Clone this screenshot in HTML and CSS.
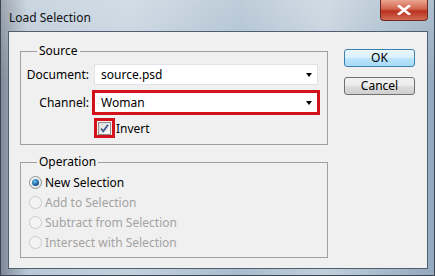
FILE: index.html
```html
<!DOCTYPE html>
<html lang="en">

<head>
  <meta charset="UTF-8">
  <title>Load Selection</title>
  <link rel="stylesheet" href="styles.css">
</head>

<body>
  <div class="window">
    <div class="titlebar">
      <span class="title">Load Selection</span>
      <div class="close">
        <svg width="14" height="10" viewBox="0 0 14 10">
          <path d="M2 1 L12 9 M12 1 L2 9" stroke="#fff" stroke-width="2.6" stroke-linecap="square" />
        </svg>
      </div>
    </div>

    <div class="client">
      <div class="groups">
        <fieldset class="group source">
          <legend>Source</legend>
          <div class="field">
            <label>Document:</label>
            <div class="select">
              <span>source.psd</span>
              <span class="arrow"></span>
            </div>
          </div>
          <div class="field">
            <label>Channel:</label>
            <div class="select marked">
              <span>Woman</span>
              <span class="arrow"></span>
            </div>
          </div>
          <div class="check-row">
            <span class="mark-box">
              <span class="checkbox">
                <svg width="11" height="11" viewBox="0 0 11 11">
                  <path d="M2 5.5 L4.3 8.3 L9 1.8" fill="none" stroke="#3e5a8a" stroke-width="1.8" />
                </svg>
              </span>
            </span>
            <span>Invert</span>
          </div>
        </fieldset>

        <fieldset class="group operation">
          <legend>Operation</legend>
          <div class="options">
            <div class="radio checked"><span class="dot"></span>New Selection</div>
            <div class="radio disabled"><span class="dot"></span>Add to Selection</div>
            <div class="radio disabled"><span class="dot"></span>Subtract from Selection</div>
            <div class="radio disabled"><span class="dot"></span>Intersect with Selection</div>
          </div>
        </fieldset>
      </div>

      <div class="buttons">
        <div class="btn default">OK</div>
        <div class="btn">Cancel</div>
      </div>
    </div>
  </div>
</body>

</html>
```

FILE: styles.css
```css
body {
  margin: 0;
  padding: 0;
  font-family: "Noto Sans", "Open Sans", sans-serif;
  font-size: 12px;
  color: #000;
}

.window {
  width: 435px;
  height: 276px;
  box-sizing: border-box;
  border: 1px solid #3b4654;
  border-top: none;
  background:
    linear-gradient(to bottom, rgba(255, 255, 255, 0.25), rgba(255, 255, 255, 0) 30%),
    linear-gradient(to right, #7d8896 0%, #b9c8d6 6%, #c3d1dd 30%, #a9bccd 55%, #c1cfdb 75%, #93a9bf 100%);
  display: flex;
  flex-direction: column;
}

.titlebar {
  height: 31px;
  display: flex;
  align-items: flex-start;
}

.title {
  padding: 9px 0 0 8px;
  font-size: 12px;
  color: #111;
}

.close {
  margin-left: auto;
  margin-right: 6px;
  width: 46px;
  height: 20px;
  border: 1px solid #6b2b20;
  border-top: none;
  border-radius: 0 0 4px 4px;
  background: linear-gradient(to bottom, #e9a48f, #d2654f 45%, #b8321f 55%, #d46b55);
  display: flex;
  align-items: center;
  justify-content: center;
}

.client {
  flex: 1;
  margin: 0 6px 6px 7px;
  border: 1px solid #4f5e70;
  background: #f0f0f0;
  display: flex;
}

.groups {
  padding: 11px 0 0 11px;
}

.group {
  width: 308px;
  box-sizing: border-box;
  margin: 0;
  padding: 0;
  border: 1px solid #a0a0a0;
}

.group legend {
  margin-left: 16px;
  padding: 0 2px;
  line-height: 16px;
}

.source {
  padding: 5px 0 6px 0;
}

.field {
  display: flex;
  align-items: center;
  gap: 5px;
  margin-bottom: 7px;
}

.field label {
  width: 68px;
  text-align: right;
}

.select {
  width: 224px;
  height: 21px;
  box-sizing: border-box;
  border: 1px solid #e2e3e6;
  background: #fff;
  display: flex;
  align-items: center;
  padding: 0 5px 0 6px;
}

.select.marked {
  border-color: #d4121c;
  outline: 2px solid #d4121c;
}

.select .arrow {
  margin-left: auto;
  border-left: 3.5px solid transparent;
  border-right: 3.5px solid transparent;
  border-top: 4px solid #000;
}

.check-row {
  display: flex;
  align-items: center;
  margin: -2px 0 0 73px;
  gap: 1px;
}

.mark-box {
  width: 21px;
  height: 20px;
  box-sizing: border-box;
  border: 3px solid #d4121c;
  display: flex;
  align-items: center;
  justify-content: center;
}

.checkbox {
  width: 13px;
  height: 13px;
  box-sizing: border-box;
  border: 1px solid #8f8f8f;
  background: linear-gradient(135deg, #dcdcdc, #fbfbfb);
  display: flex;
  align-items: center;
  justify-content: center;
}

.operation {
  margin-top: 9px;
  padding: 2px 0 5px 0;
}

.options {
  padding-left: 8px;
}

.radio {
  height: 20px;
  display: flex;
  align-items: center;
  gap: 3px;
}

.radio .dot {
  width: 13px;
  height: 13px;
  box-sizing: border-box;
  border-radius: 50%;
  border: 1px solid #8e8f8f;
  background: radial-gradient(circle at 40% 40%, #fff, #dedede);
  display: flex;
  align-items: center;
  justify-content: center;
}

.radio.checked .dot::after {
  content: "";
  width: 7px;
  height: 7px;
  border-radius: 50%;
  background: radial-gradient(circle at 40% 35%, #6cc0ef, #1d5f9c 60%, #0f3a66);
}

.radio.disabled {
  color: #a3a3a3;
}

.radio.disabled .dot {
  border-color: #cacaca;
  background: #f4f4f4;
}

.buttons {
  margin: 17px 0 0 16px;
  display: flex;
  flex-direction: column;
  gap: 10px;
}

.btn {
  width: 71px;
  height: 18px;
  box-sizing: border-box;
  border: 1px solid #707070;
  border-radius: 3px;
  background: linear-gradient(to bottom, #f2f2f2 0%, #ebebeb 50%, #dddddd 51%, #cfcfcf 100%);
  text-align: center;
  line-height: 15px;
}

.btn.default {
  border-color: #3c7fb1;
  background: linear-gradient(to bottom, #eaf6fd 0%, #d9f0fc 50%, #bee6fd 51%, #a7d9f5 100%);
}
```
